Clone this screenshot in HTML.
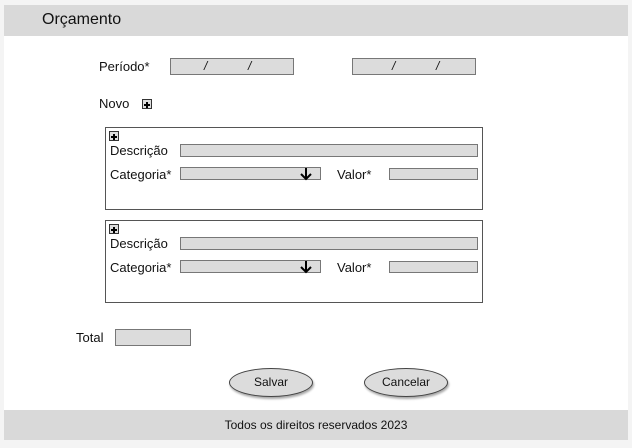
<!DOCTYPE html>
<html><head><meta charset="utf-8"><style>
*{margin:0;padding:0;box-sizing:border-box}
body{width:632px;height:448px;background:#f4f4f4;position:relative;font-family:"Liberation Sans",sans-serif;color:#111;overflow:hidden}
.a{position:absolute}
.main{left:4px;top:5px;width:624px;height:435px;background:#fff}
.hdr{left:4px;top:5px;width:624px;height:31px;background:#d9d9d9}
.t{font-size:13px;white-space:nowrap;line-height:16px}
.in{background:#dcdcdc;border:1px solid #777}
.box{border:1px solid #555;background:#fff}
.plus{width:10px;height:10px;border:1px solid #333;background:#ddd}
.plus:before{content:"";position:absolute;left:1px;top:3.5px;width:6px;height:2px;background:#000}
.plus:after{content:"";position:absolute;left:3px;top:1.5px;width:2px;height:6px;background:#000}
.ell{width:84px;height:29px;border:1px solid #444;border-radius:50%;background:#dcdcdc;box-shadow:1px 2px 2px rgba(0,0,0,.35);font-size:12px;text-align:center;line-height:27px}
.sl{font-size:12px;font-style:italic}
</style></head><body>
<div class="a main"></div>
<div class="a hdr"></div>
<div class="a" style="left:42px;top:11px;font-size:16px">Orçamento</div>

<div class="a t" style="left:99px;top:59px">Período*</div>
<div class="a in" style="left:170px;top:58px;width:124px;height:17px"></div>
<div class="a sl" style="left:204px;top:59px">/</div><div class="a sl" style="left:248px;top:59px">/</div>
<div class="a in" style="left:352px;top:58px;width:124px;height:17px"></div>
<div class="a sl" style="left:392px;top:59px">/</div><div class="a sl" style="left:436px;top:59px">/</div>

<div class="a t" style="left:99px;top:96px">Novo</div>
<div class="a plus" style="left:142px;top:99px"></div>

<div class="a box" style="left:105px;top:127px;width:378px;height:83px"></div>
<div class="a plus" style="left:109px;top:131px"></div>
<div class="a t" style="left:110px;top:143px">Descrição</div>
<div class="a in" style="left:180px;top:144px;width:298px;height:13px"></div>
<div class="a t" style="left:110px;top:167px">Categoria*</div>
<div class="a in" style="left:180px;top:167px;width:141px;height:13px"></div>
<svg class="a" style="left:299px;top:167px" width="14" height="14" viewBox="0 0 14 14"><path d="M7 1V12M2 7L7 12L12 7" stroke="#000" stroke-width="2" fill="none"/></svg>
<div class="a t" style="left:337px;top:167px">Valor*</div>
<div class="a in" style="left:389px;top:168px;width:89px;height:12px"></div>

<div class="a box" style="left:105px;top:220px;width:378px;height:83px"></div>
<div class="a plus" style="left:109px;top:224px"></div>
<div class="a t" style="left:110px;top:236px">Descrição</div>
<div class="a in" style="left:180px;top:237px;width:298px;height:13px"></div>
<div class="a t" style="left:110px;top:260px">Categoria*</div>
<div class="a in" style="left:180px;top:260px;width:141px;height:13px"></div>
<svg class="a" style="left:299px;top:260px" width="14" height="14" viewBox="0 0 14 14"><path d="M7 1V12M2 7L7 12L12 7" stroke="#000" stroke-width="2" fill="none"/></svg>
<div class="a t" style="left:337px;top:260px">Valor*</div>
<div class="a in" style="left:389px;top:261px;width:89px;height:12px"></div>

<div class="a t" style="left:76px;top:330px">Total</div>
<div class="a in" style="left:115px;top:329px;width:76px;height:17px"></div>

<div class="a ell" style="left:229px;top:368px">Salvar</div>
<div class="a ell" style="left:364px;top:368px">Cancelar</div>

<div class="a" style="left:4px;top:410px;width:624px;height:30px;background:#d9d9d9;font-size:12px;text-align:center;line-height:30px">Todos os direitos reservados 2023</div>
</body></html>
